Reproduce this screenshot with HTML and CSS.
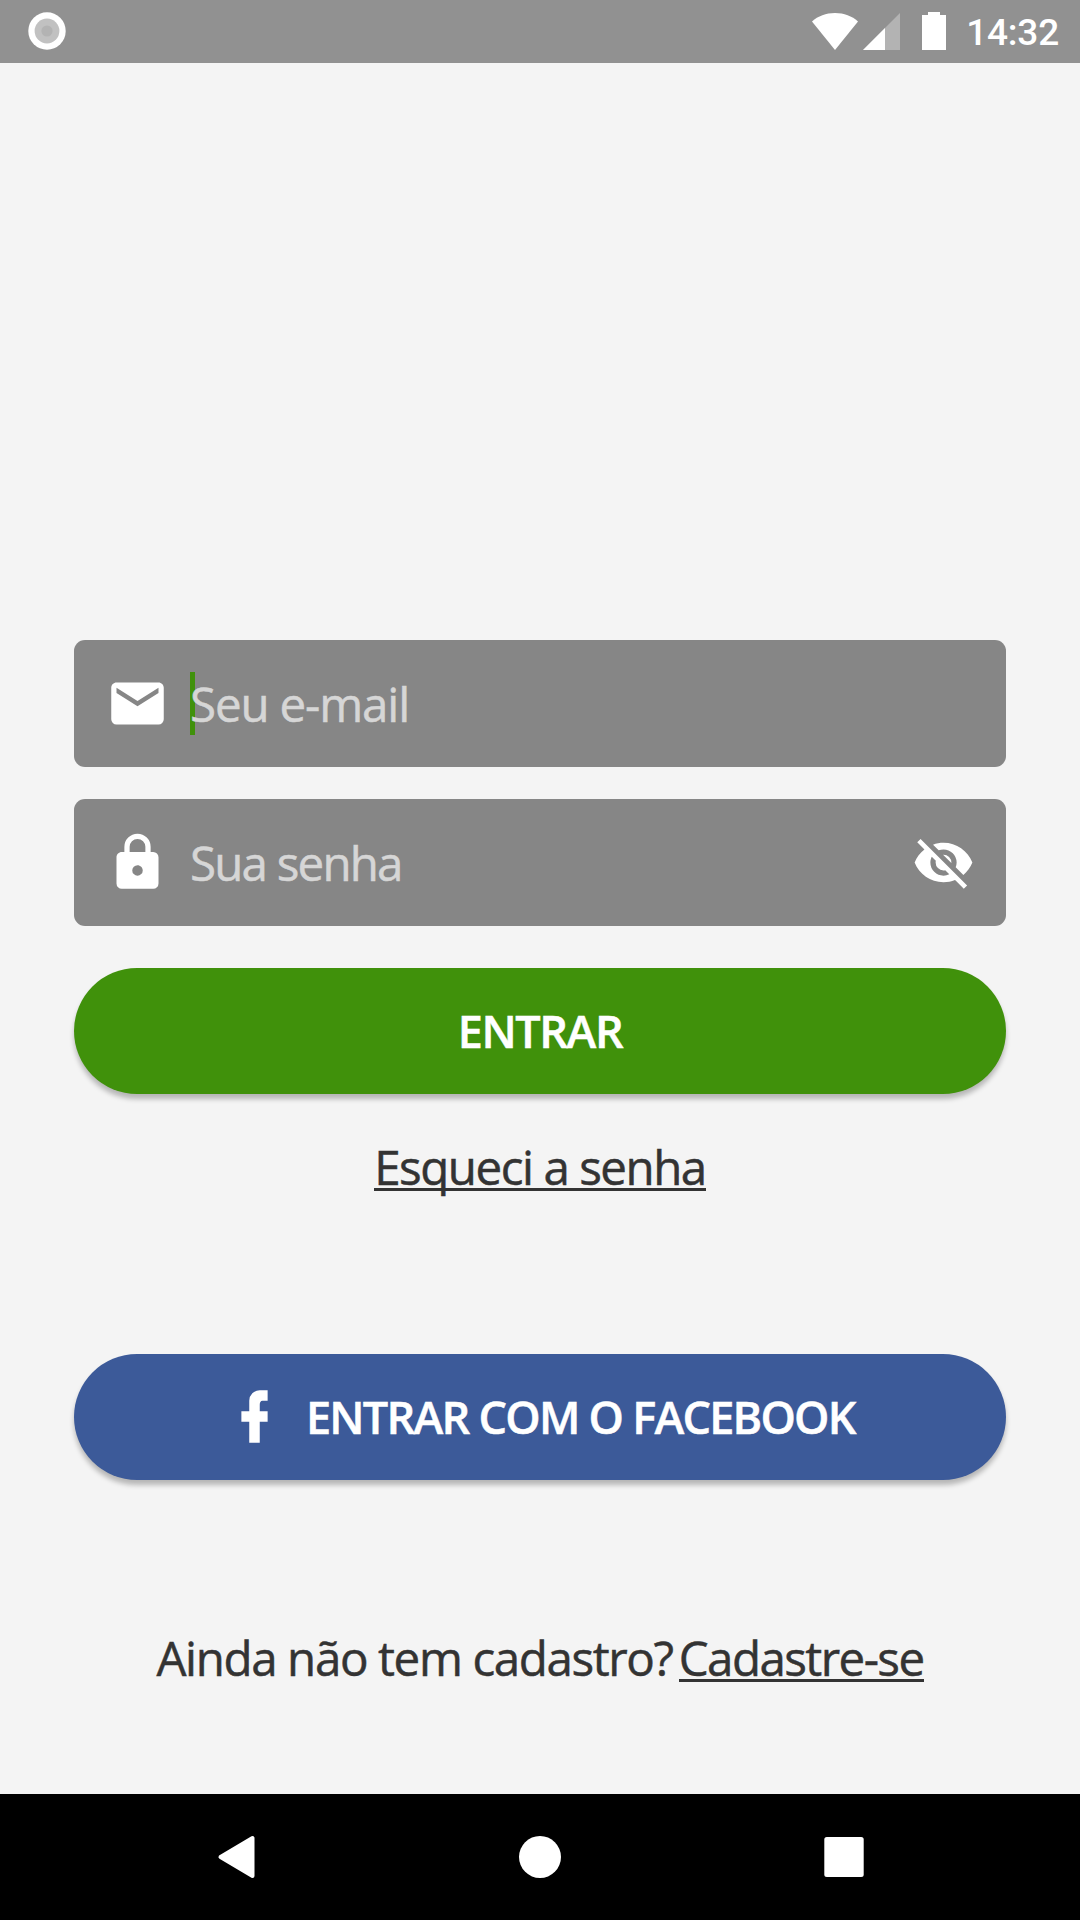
FILE: index.html
```html
<!DOCTYPE html>
<html lang="pt-BR">

<head>
    <meta charset="UTF-8">
    <title>Entrar</title>
    <link rel="stylesheet" href="styles.css">
</head>

<body>
    <header class="status-bar">
        <svg class="record" viewBox="0 0 38 38">
            <circle cx="19" cy="19" r="18.7" fill="#fff" />
            <circle cx="19" cy="19" r="12.4" fill="#c1c1c1" />
            <circle cx="19" cy="19" r="5.6" fill="#b3b3b3" />
        </svg>
        <div class="status-icons">
            <svg class="wifi" viewBox="0 0 46 37">
                <path d="M0 8.5C6 3 14 0 23 0s17 3 23 8.5L23 37z" fill="#fff" />
            </svg>
            <svg class="signal" viewBox="0 0 37 37">
                <path d="M37 0v37H0z" fill="#b3b3b3" />
                <path d="M22 15v22H0z" fill="#fff" />
            </svg>
            <svg class="battery" viewBox="0 0 24 38">
                <path d="M6 0h12v3h6v35H0V3h6z" fill="#fff" />
            </svg>
            <span class="time">14:32</span>
        </div>
    </header>

    <main class="content">
        <form class="login">
            <div class="field">
                <svg class="icon" viewBox="0 0 24 24">
                    <path d="M20,8L12,13L4,8V6L12,11L20,6M20,4H4C2.89,4 2,4.89 2,6V18A2,2 0 0,0 4,20H20A2,2 0 0,0 22,18V6C22,4.89 21.1,4 20,4Z" />
                </svg>
                <div class="input-box">
                    <span class="caret"></span>
                    <input class="input email" type="email" placeholder="Seu e-mail">
                </div>
            </div>
            <div class="field">
                <svg class="icon" viewBox="0 0 24 24">
                    <path d="M12,17A2,2 0 0,0 14,15C14,13.89 13.1,13 12,13A2,2 0 0,0 10,15A2,2 0 0,0 12,17M18,8A2,2 0 0,1 20,10V20A2,2 0 0,1 18,22H6A2,2 0 0,1 4,20V10C4,8.89 4.9,8 6,8H7V6A5,5 0 0,1 12,1A5,5 0 0,1 17,6V8H18M12,3A3,3 0 0,0 9,6V8H15V6A3,3 0 0,0 12,3Z" />
                </svg>
                <div class="input-box">
                    <input class="input password" type="password" placeholder="Sua senha">
                </div>
                <svg class="icon" viewBox="0 0 24 24">
                    <path d="M11.83,9L15,12.16C15,12.11 15,12.05 15,12A3,3 0 0,0 12,9C11.94,9 11.89,9 11.83,9M7.53,9.8L9.08,11.35C9.03,11.56 9,11.77 9,12A3,3 0 0,0 12,15C12.22,15 12.44,14.97 12.65,14.92L14.2,16.47C13.53,16.8 12.79,17 12,17A5,5 0 0,1 7,12C7,11.21 7.2,10.47 7.53,9.8M2,4.27L4.28,6.55L4.73,7C3.08,8.3 1.78,10 1,12C2.73,16.39 7,19.5 12,19.5C13.55,19.5 15.03,19.2 16.38,18.66L16.81,19.08L19.73,22L21,20.73L3.27,3M12,7A5,5 0 0,1 17,12C17,12.64 16.87,13.26 16.64,13.82L19.57,16.75C21.07,15.5 22.27,13.86 23,12C21.27,7.61 17,4.5 12,4.5C10.6,4.5 9.26,4.75 8,5.2L10.17,7.35C10.74,7.13 11.35,7 12,7Z" />
                </svg>
            </div>
            <button class="btn btn-login" type="button">ENTRAR</button>
        </form>

        <a class="link forgot">Esqueci a senha</a>

        <button class="btn btn-facebook" type="button">
            <svg class="icon" viewBox="0 0 24 24">
                <path d="M17,2V6H15C14.31,6 14,6.81 14,7.5V10H17V14H14V22H10V14H7V10H10V6A4,4 0 0,1 14,2H17Z" />
            </svg>
            <span class="facebook-text">ENTRAR COM O FACEBOOK</span>
        </button>

        <p class="signup">
            <span class="question">Ainda não tem cadastro?</span>
            <a class="link register">Cadastre-se</a>
        </p>
    </main>

    <nav class="nav-bar">
        <svg class="nav-icon" viewBox="0 0 44 44">
            <path d="M38.5 3v38L6.5 22z" fill="#fff" stroke="#fff" stroke-width="4" stroke-linejoin="round" />
        </svg>
        <svg class="nav-icon" viewBox="0 0 44 44">
            <circle cx="22" cy="22" r="21" fill="#fff" />
        </svg>
        <svg class="nav-icon" viewBox="0 0 44 44">
            <rect x="2.3" y="2" width="39.4" height="40" rx="2.5" fill="#fff" />
        </svg>
    </nav>
</body>

</html>
```
FILE: styles.css
```css
* {
    box-sizing: border-box;
}

body {
    font-family: "Open Sans", "Noto Sans", sans-serif;
    margin: 0;
    height: 1920px;
    display: flex;
    flex-direction: column;
    background-color: #f4f4f4;
    color: #333;
}

svg {
    display: block;
    flex: none;
}

.status-bar {
    display: flex;
    align-items: center;
    justify-content: space-between;
    height: 63px;
    padding: 0 21px 0 28px;
    background-color: #919191;
}

.record {
    width: 38px;
    height: 38px;
    margin-bottom: 1px;
}

.status-icons {
    display: flex;
    align-items: center;
}

.wifi {
    width: 46px;
    height: 37px;
    margin-right: 5px;
}

.signal {
    width: 37px;
    height: 37px;
    margin-right: 22px;
}

.battery {
    width: 24px;
    height: 38px;
    margin-right: 20px;
    margin-bottom: 1px;
}

.time {
    font-family: Roboto, sans-serif;
    font-size: 37px;
    font-weight: 500;
    line-height: 44px;
    letter-spacing: -0.2px;
    color: #fff;
    padding-top: 2px;
}

.content {
    flex: 1;
    display: flex;
    flex-direction: column;
    align-items: center;
    padding: 577px 74px 0;
}

.login {
    width: 100%;
}

.field {
    display: flex;
    align-items: center;
    height: 127px;
    margin-bottom: 32px;
    padding: 0 31px 0 32px;
    border-radius: 11px;
    background-color: #868686;
}

.icon {
    width: 63px;
    height: 63px;
    fill: #fff;
}

.input-box {
    position: relative;
    flex: 1;
    margin-left: 21px;
}

.caret {
    position: absolute;
    left: 0;
    top: 0;
    width: 5px;
    height: 63px;
    background-color: #40910b;
}

.input {
    position: relative;
    display: block;
    width: 100%;
    height: 63px;
    padding: 0;
    border: none;
    outline: none;
    background: transparent;
    font-family: inherit;
    font-size: 47.5px;
    -webkit-text-stroke: 0.5px #d6d6d6;
}

.input::placeholder {
    color: #d6d6d6;
    opacity: 1;
}

.email {
    letter-spacing: -1.15px;
}

.password {
    letter-spacing: -1.8px;
}

.btn {
    display: flex;
    align-items: center;
    justify-content: center;
    width: 100%;
    height: 126px;
    padding: 0 0 2px;
    border: none;
    border-radius: 63px;
    box-shadow: 0 5px 5px rgba(0, 0, 0, 0.25);
    color: #fff;
    font-family: inherit;
    font-size: 45px;
    font-weight: 600;
    letter-spacing: -1.4px;
    -webkit-text-stroke: 0.5px #fff;
}

.btn-login {
    margin-top: 42px;
    background-color: #40910b;
}

.btn-facebook {
    justify-content: flex-start;
    padding-left: 149px;
    background-color: #3c5a99;
}

.facebook-text {
    margin-left: 20px;
    letter-spacing: -1.75px;
}

.link {
    border-bottom: 3px solid #333;
}

.forgot,
.signup {
    height: 56px;
    line-height: 64px;
    font-size: 47.5px;
    -webkit-text-stroke: 0.5px #333;
}

.forgot {
    margin: 41px 0 163px;
    letter-spacing: -1.47px;
}

.signup {
    display: flex;
    margin: 146px 0 0;
}

.question {
    letter-spacing: -1.38px;
}

.register {
    margin-left: 6px;
    letter-spacing: -1.56px;
}

.nav-bar {
    display: flex;
    align-items: center;
    justify-content: space-between;
    height: 126px;
    padding: 0 214px;
    background-color: #000;
}

.nav-icon {
    width: 44px;
    height: 44px;
}
```
